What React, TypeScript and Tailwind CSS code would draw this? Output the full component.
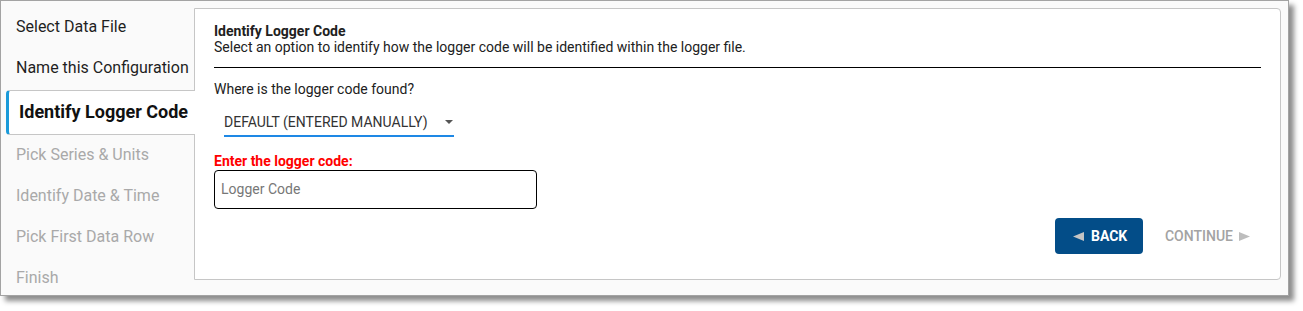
import React from "react";

const Item = ({ label, disabled, className = "" }: { label: string; disabled?: boolean; className?: string }) => (
  <div
    className={`h-[41px] shrink-0 w-[188px] flex items-center pl-[10px] text-[16px] whitespace-nowrap ${
      disabled ? "text-[#a9a9a9]" : "text-[#1f1f1f]"
    } ${className}`}
  >
    {label}
  </div>
);

export default function App() {
  return (
    <div className="w-[1303px] h-[311px] bg-white" style={{ fontFamily: "Roboto, 'Liberation Sans', sans-serif" }}>
      <div className="w-[1289px] h-[296px] border border-[#a3a3a3] bg-[#fafafa] shadow-[5px_5px_5px_rgba(0,0,0,0.45)] flex pt-[7px] overflow-visible">
        {/* Sidebar */}
        <div className="w-[193px] shrink-0 pl-[5px] -mt-[2px] flex flex-col">
          <Item label="Select Data File" />
          <Item label="Name this Configuration" />
          <div className="relative z-10 shrink-0 mt-[2px] w-[189px] h-[45px] bg-white border-y border-[#c6c6c6] border-l-[3px] border-l-[#1a9ad9] rounded-l-[4px] flex items-center pl-[10px] pb-[3px] text-[18px] font-bold text-[#111] whitespace-nowrap">
            Identify Logger Code
          </div>
          <Item label="Pick Series & Units" disabled className="-mt-[1px]" />
          <Item label="Identify Date & Time" disabled />
          <Item label="Pick First Data Row" disabled />
          <Item label="Finish" disabled />
        </div>

        {/* Main panel */}
        <div className="w-[1087px] h-[272px] shrink-0 bg-white border border-[#c6c6c6] rounded-r-[4px] px-[19px] pt-[14px] flex flex-col text-[14px] text-[#212121]">
          <div className="leading-[16px] font-bold">Identify Logger Code</div>
          <div className="leading-[16px]">
            Select an option to identify how the logger code will be identified within the logger file.
          </div>
          <div className="mt-[12px] border-t border-black" />
          <div className="mt-[13px] leading-[16px]">Where is the logger code found?</div>
          <div className="mt-[17px] ml-[10px] w-[230px] border-b-2 border-[#1e88e5] pb-[5px] flex items-center justify-between">
            <span className="leading-[16px] text-[#333]">DEFAULT (ENTERED MANUALLY)</span>
            <svg width="8" height="4" viewBox="0 0 8 4" className="mr-[1px]">
              <path d="M0 0 L8 0 L4 4 Z" fill="#555" />
            </svg>
          </div>
          <div className="mt-[16px] leading-[16px] font-bold text-[#ff0000]">Enter the logger code:</div>
          <div className="mt-[1px] w-[323px] h-[39px] border border-black rounded-[4px] flex items-center px-[6px] text-[#777]">
            Logger Code
          </div>
          <div className="mt-[9px] flex justify-end items-center pr-[11px]">
            <div className="w-[88px] h-[36px] rounded-[4px] bg-[#034d88] flex items-center pl-[18px] gap-[7px] text-white font-bold">
              <svg width="11" height="9" viewBox="0 0 11 9">
                <path d="M0 4.5 L11 0 L11 9 Z" fill="#c4c4c4" />
              </svg>
              <span className="leading-[16px]">BACK</span>
            </div>
            <div className="ml-[22px] flex items-center gap-[6px] text-[#a3a3a3] font-medium">
              <span className="leading-[16px]">CONTINUE</span>
              <svg width="11" height="9" viewBox="0 0 11 9">
                <path d="M11 4.5 L0 0 L0 9 Z" fill="#bdbdbd" />
              </svg>
            </div>
          </div>
        </div>
      </div>
    </div>
  );
}
